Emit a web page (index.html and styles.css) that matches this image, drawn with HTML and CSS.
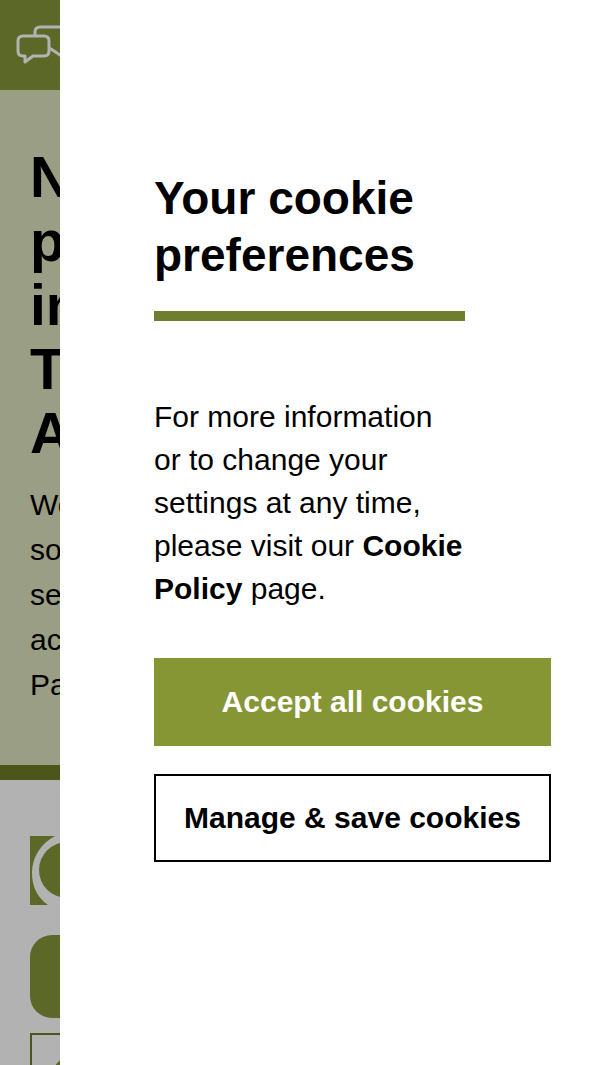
FILE: index.html
```html
<!DOCTYPE html>
<html lang="en">
<head>
    <meta charset="UTF-8">
    <meta name="viewport" content="width=device-width, initial-scale=1.0">
    <title>Your cookie preferences</title>
    <link rel="stylesheet" href="styles.css">
</head>
<body>
    <div class="page">
        <header class="site-header">
            <svg class="chat-icon" viewBox="0 0 70 42" fill="none" stroke="#fff" stroke-width="3" stroke-linejoin="round" aria-hidden="true">
                <path d="M19 13V8q0-5 5-5h36q5 0 5 5v17q0 5-5 5v7l-8-6h-8l-9-6h-3"/>
                <path d="M7 12h21q5 0 5 5v10q0 5-5 5H17l-8 6v-6H7q-5 0-5-5V17q0-5 5-5z"/>
            </svg>
        </header>

        <section class="hero">
            <h1>N<br>p<br>in<br>T<br>A</h1>
            <p>We<br>so<br>se<br>ac<br>Pa</p>
        </section>

        <main class="content">
            <svg class="emblem" viewBox="0 0 69 69" aria-hidden="true">
                <path fill="#859639" d="M0 0h25C10 8 2 22 2 37c0 14 6 25 16 32H0z"/>
                <circle cx="37" cy="34" r="28" fill="#859639"/>
            </svg>
            <div class="banner"></div>
            <div class="card">
                <svg class="card-icon" viewBox="0 0 60 60" fill="none" stroke="#859639" stroke-width="4" aria-hidden="true">
                    <path d="M0 8L4 4l26 26"/>
                </svg>
            </div>
        </main>
    </div>

    <div class="overlay"></div>

    <div class="cookie-panel" role="dialog" aria-labelledby="cookie-title">
        <div class="cookie-text">
            <h2 id="cookie-title">Your cookie preferences</h2>
            <p>For more information or to change your settings at any time, please visit our <a href="#">Cookie Policy</a> page.</p>
        </div>
        <div class="cookie-actions">
            <button type="button" class="btn btn-primary">Accept all cookies</button>
            <button type="button" class="btn btn-outline">Manage &amp; save cookies</button>
        </div>
    </div>
</body>
</html>
```
FILE: styles.css
```css
* {
    margin: 0;
    padding: 0;
    box-sizing: border-box;
}

body {
    font-family: "Liberation Sans", Arial, sans-serif;
    font-size: 30px;
    color: #000;
    background-color: #fff;
}

.page {
    height: 100vh;
    overflow: hidden;
}

.site-header {
    display: flex;
    align-items: center;
    height: 90px;
    padding: 0 16px;
    background-color: #859639;
}

.chat-icon {
    width: 70px;
    height: 42px;
}

.hero {
    padding: 55px 30px 58px;
    background-color: #dbe2bf;
    border-bottom: 15px solid #6e7b28;
}

.hero h1 {
    margin-bottom: 17px;
    font-size: 57px;
    line-height: 64px;
}

.hero p {
    line-height: 45px;
}

.content {
    display: flex;
    flex-direction: column;
    padding: 56px 30px;
}

.emblem {
    width: 69px;
    height: 69px;
    margin-bottom: 30px;
}

.banner {
    height: 83px;
    margin-bottom: 15px;
    border-radius: 22px;
    background-color: #859639;
}

.card {
    padding: 24px;
    border: 2px solid #6e7b28;
}

.card-icon {
    width: 60px;
    height: 60px;
}

.overlay {
    position: fixed;
    inset: 0;
    background-color: rgba(0, 0, 0, 0.3);
}

.cookie-panel {
    position: fixed;
    top: 0;
    right: 0;
    bottom: 0;
    width: 90%;
    padding: 170px 49px 48px 94px;
    overflow-y: auto;
    background-color: #fff;
}

.cookie-text {
    max-width: 311px;
    margin-bottom: 48px;
}

.cookie-text h2 {
    margin-bottom: 74px;
    padding-bottom: 27px;
    border-bottom: 10px solid #6f7d2f;
    font-size: 46px;
    line-height: 57px;
}

.cookie-text p {
    line-height: 43px;
}

.cookie-text a {
    color: #000;
    font-weight: bold;
    text-decoration: none;
}

.cookie-actions {
    display: flex;
    flex-direction: column;
    gap: 28px;
}

.btn {
    height: 88px;
    border: 2px solid #000;
    font-family: inherit;
    font-size: 30px;
    font-weight: bold;
    white-space: nowrap;
    cursor: pointer;
}

.btn-primary {
    border-color: #869635;
    background-color: #869635;
    color: #fff;
}

.btn-outline {
    background-color: #fff;
    color: #000;
}
```
